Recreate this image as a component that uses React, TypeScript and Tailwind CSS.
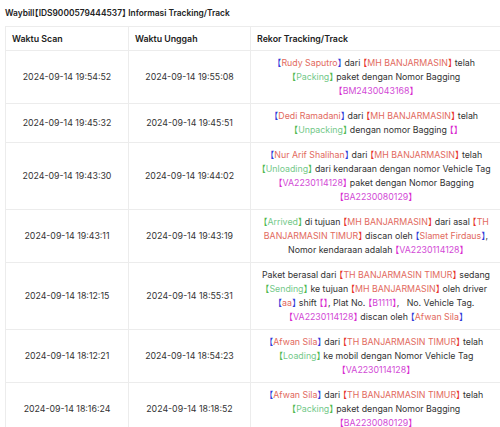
import React from "react";

type Seg = [string, string] | string;

const styles: Record<string, { b: string; t: string }> = {
  n: { b: "text-[#2f3bd9]", t: "text-[#e26a5e]" },
  l: { b: "text-[#e8322a]", t: "text-[#e26a5e]" },
  s: { b: "text-[#4fb84f]", t: "text-[#74c98a]" },
  m: { b: "text-[#d92bd0]", t: "text-[#d24ad6]" },
};

const Tag = ({ kind, children }: { kind: string; children: React.ReactNode }) => (
  <>
    <span className={styles[kind].b}>【</span>
    <span className={styles[kind].t}>{children}</span>
    <span className={styles[kind].b}>】</span>
  </>
);

interface Row {
  scan: string;
  upload: string;
  record: Seg[];
}

const rows: Row[] = [
  {
    scan: "2024-09-14 19:54:52",
    upload: "2024-09-14 19:55:08",
    record: [["n", "Rudy Saputro"], " dari ", ["l", "MH BANJARMASIN"], " telah ", ["s", "Packing"], " paket dengan Nomor Bagging ", ["m", "BM2430043168"]],
  },
  {
    scan: "2024-09-14 19:45:32",
    upload: "2024-09-14 19:45:51",
    record: [["n", "Dedi Ramadani"], " dari ", ["l", "MH BANJARMASIN"], " telah ", ["s", "Unpacking"], " dengan nomor Bagging ", ["m", ""]],
  },
  {
    scan: "2024-09-14 19:43:30",
    upload: "2024-09-14 19:44:02",
    record: [["n", "Nur Arif Shalihan"], " dari ", ["l", "MH BANJARMASIN"], " telah ", ["s", "Unloading"], " dari kendaraan dengan nomor Vehicle Tag ", ["m", "VA2230114128"], " paket dengan Nomor Bagging ", ["m", "BA2230080129"]],
  },
  {
    scan: "2024-09-14 19:43:11",
    upload: "2024-09-14 19:43:19",
    record: [["s", "Arrived"], " di tujuan ", ["l", "MH BANJARMASIN"], " dari asal ", ["l", "TH BANJARMASIN TIMUR"], " discan oleh ", ["n", "Slamet Firdaus"], ", Nomor kendaraan adalah ", ["m", "VA2230114128"]],
  },
  {
    scan: "2024-09-14 18:12:15",
    upload: "2024-09-14 18:55:31",
    record: ["Paket berasal dari ", ["l", "TH BANJARMASIN TIMUR"], " sedang ", ["s", "Sending"], " ke tujuan ", ["l", "MH BANJARMASIN"], " oleh driver ", ["n", "aa"], " shift ", ["m", ""], ", Plat No. ", ["m", "B1111"], ",\u00a0\u00a0 No. Vehicle Tag. ", ["m", "VA2230114128"], " discan oleh ", ["n", "Afwan Sila"]],
  },
  {
    scan: "2024-09-14 18:12:21",
    upload: "2024-09-14 18:54:23",
    record: [["n", "Afwan Sila"], " dari ", ["l", "TH BANJARMASIN TIMUR"], " telah ", ["s", "Loading"], " ke mobil dengan Nomor Vehicle Tag ", ["m", "VA2230114128"]],
  },
  {
    scan: "2024-09-14 18:16:24",
    upload: "2024-09-14 18:18:52",
    record: [["n", "Afwan Sila"], " dari ", ["l", "TH BANJARMASIN TIMUR"], " telah ", ["s", "Packing"], " paket dengan Nomor Bagging ", ["m", "BA2230080129"]],
  },
];

export default function App() {
  return (
    <div
      className="w-[500px] h-[427px] overflow-hidden bg-white text-[#333] pl-[5px] [font-feature-settings:'halt']"
      style={{ fontFamily: "Inter, 'Noto Sans CJK SC', sans-serif" }}
    >
      <div className="h-[26px] pt-[1px] flex items-center text-[8.4px] font-semibold text-[#222]">
        Waybill【IDS9000579444537】 Informasi Tracking/Track
      </div>
      <table className="w-[497px] border-collapse text-[8.8px] leading-[14px] table-fixed">
        <colgroup>
          <col className="w-[123px]" />
          <col className="w-[122px]" />
          <col />
        </colgroup>
        <thead>
          <tr className="h-[24px]">
            <th className="border border-[#ececec] text-left font-semibold text-[#222] px-[6px]">Waktu Scan</th>
            <th className="border border-[#ececec] text-left font-semibold text-[#222] px-[6px]">Waktu Unggah</th>
            <th className="border border-[#ececec] text-left font-semibold text-[#222] px-[6px]">Rekor Tracking/Track</th>
          </tr>
        </thead>
        <tbody>
          {rows.map((r) => (
            <tr key={r.scan}>
              <td className="border border-[#ececec] text-center py-[5px]">{r.scan}</td>
              <td className="border border-[#ececec] text-center py-[5px]">{r.upload}</td>
              <td className="border border-[#ececec] text-center py-[5px] px-[8px]">
                {r.record.map((s, i) =>
                  typeof s === "string" ? (
                    <span key={i}>{s}</span>
                  ) : (
                    <Tag key={i} kind={s[0]}>
                      {s[1]}
                    </Tag>
                  )
                )}
              </td>
            </tr>
          ))}
        </tbody>
      </table>
    </div>
  );
}
